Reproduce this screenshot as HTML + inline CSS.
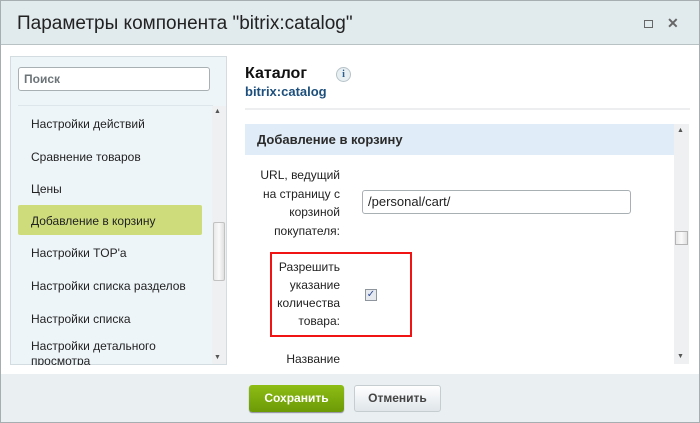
<!DOCTYPE html>
<html><head><meta charset="utf-8"><style>
*{margin:0;padding:0;box-sizing:border-box}
body{width:700px;height:423px;overflow:hidden;font-family:"Liberation Sans",Arial,sans-serif;background:#fff;position:relative;font-size:12px;color:#000}
.a{position:absolute}
</style></head><body>
<div class="a" style="left:0;top:0;width:700px;height:423px;border:1px solid #a7aeb1;background:#fff"></div>
<div class="a" style="left:1px;top:1px;width:698px;height:44px;background:#e1eaed;border-bottom:1px solid #b8c1c4"></div>
<div class="a" style="left:17px;top:13px;font-size:19px;color:#222">Параметры компонента "bitrix:catalog"</div>
<div class="a" style="left:644px;top:20px;width:9px;height:8px;border:1.5px solid #666"></div>
<div class="a" style="left:667px;top:15px;font-size:14px;color:#666;font-weight:bold">✕</div>

<div class="a" style="left:10px;top:56px;width:217px;height:309px;background:#eef5f9;border:1px solid #d3dce0"></div>
<div class="a" style="left:18px;top:67px;width:192px;height:24px;background:#fff;border:1px solid #a9b0b3;border-radius:3px;color:#6c7478;font-weight:bold;padding:4px 5px;font-size:12px">Поиск</div>
<div class="a" style="left:18px;top:105px;width:195px;height:1px;background:#dde6ea"></div>
<div class="a" style="left:212px;top:106px;width:14px;height:258px;background:#eef0f1"></div>
<div class="a" style="left:214px;top:108px;font-size:7px;color:#555">▲</div>
<div class="a" style="left:214px;top:354px;font-size:7px;color:#555">▼</div>
<div class="a" style="left:213px;top:222px;width:12px;height:59px;background:linear-gradient(90deg,#e8e8e8,#fafafa,#e0e0e0);border:1px solid #c2c2c2;border-radius:2px"></div>
<div class="a" style="left:18px;top:205px;width:184px;height:30px;background:#cedc7b;border-radius:2px"></div>
<div class="a" style="left:31px;top:116px;line-height:16px;font-size:12px;color:#222">
<div style="position:absolute;top:0;white-space:nowrap">Настройки действий</div>
<div style="position:absolute;top:33px;white-space:nowrap">Сравнение товаров</div>
<div style="position:absolute;top:65px;white-space:nowrap">Цены</div>
<div style="position:absolute;top:97px;white-space:nowrap">Добавление в корзину</div>
<div style="position:absolute;top:129px;white-space:nowrap">Настройки TOP'а</div>
<div style="position:absolute;top:162px;white-space:nowrap">Настройки списка разделов</div>
<div style="position:absolute;top:195px;white-space:nowrap">Настройки списка</div>
<div style="position:absolute;top:223px;white-space:nowrap;height:26px;overflow:hidden;line-height:15px">Настройки детального<br>просмотра</div>
</div>

<div class="a" style="left:245px;top:65px;font-size:16px;font-weight:bold;color:#111">Каталог</div>
<div class="a" style="left:245px;top:84px;font-size:13px;font-weight:bold;color:#1d4f7c">bitrix:catalog</div>
<div class="a" style="left:336px;top:67px;width:15px;height:15px;border-radius:50%;background:#e8eff3;border:1px solid #b7c3c9;color:#2a5e8c;font-size:10px;font-weight:bold;text-align:center;line-height:13px;font-family:'Liberation Serif',serif">i</div>
<div class="a" style="left:245px;top:108px;width:445px;height:2px;background:#eceeef"></div>
<div class="a" style="left:245px;top:124px;width:429px;height:31px;background:#e0ecf7"></div>
<div class="a" style="left:257px;top:132px;font-size:13px;font-weight:bold;color:#2b2b2b">Добавление в корзину</div>
<div class="a" style="left:674px;top:124px;width:15px;height:240px;background:#eef0f1"></div>
<div class="a" style="left:677px;top:127px;font-size:7px;color:#555">▲</div>
<div class="a" style="left:677px;top:353px;font-size:7px;color:#555">▼</div>
<div class="a" style="left:675px;top:231px;width:13px;height:14px;background:linear-gradient(90deg,#e8e8e8,#fafafa,#e0e0e0);border:1px solid #b4b4b4"></div>

<div class="a" style="left:240px;top:166px;width:100px;text-align:right;font-size:12px;line-height:18.5px;color:#222">URL, ведущий<br>на страницу с<br>корзиной<br>покупателя:</div>
<div class="a" style="left:362px;top:190px;width:269px;height:24px;border:1px solid #a9b0b3;border-radius:3px;padding:3px 5px;font-size:13px;color:#222">/personal/cart/</div>
<div class="a" style="left:270px;top:252px;width:142px;height:85px;border:2px solid #f01414"></div>
<div class="a" style="left:240px;top:258px;width:100px;text-align:right;font-size:12px;line-height:18px;color:#222">Разрешить указание количества товара:</div>
<div class="a" style="left:365px;top:289px;width:12px;height:12px;background:#e6e9ee;border:1px solid #8e959c;color:#2d4a9a;font-size:10px;line-height:10px;text-align:center">✓</div>
<div class="a" style="left:240px;top:352px;width:100px;text-align:right;font-size:12px;color:#222">Название</div>

<div class="a" style="left:1px;top:374px;width:698px;height:48px;background:#eaf0f2"></div>
<div class="a" style="left:249px;top:385px;width:95px;height:27px;background:linear-gradient(#8ebd15,#6b9a06);border-radius:3px;color:#fff;font-weight:bold;font-size:12px;text-align:center;line-height:27px;box-shadow:0 1px 1px #889">Сохранить</div>
<div class="a" style="left:354px;top:385px;width:87px;height:27px;background:linear-gradient(#fff,#dfe6e9);border:1px solid #c6cdd0;border-radius:3px;color:#444;font-weight:bold;font-size:12px;text-align:center;line-height:25px">Отменить</div>
</body></html>
